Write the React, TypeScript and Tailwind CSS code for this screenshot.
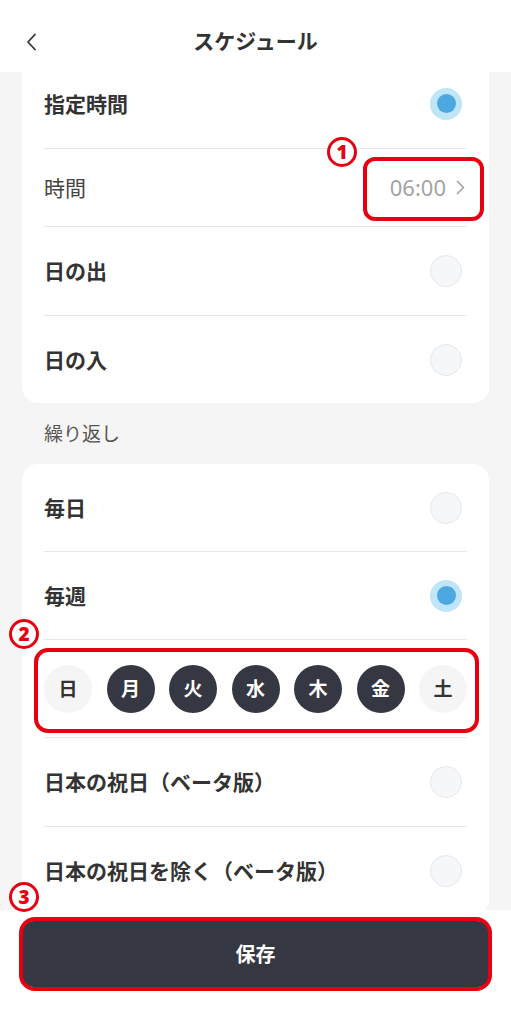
import React from "react";

const font = { fontFamily: '"Noto Sans CJK JP", "Noto Sans", sans-serif' };

function Radio({ checked }: { checked?: boolean }) {
  if (checked) {
    return (
      <div className="mr-[5px] flex h-[32px] w-[32px] items-center justify-center rounded-full bg-[#bfe5f8]">
        <div className="h-[19px] w-[19px] rounded-full bg-[#4da8e1]" />
      </div>
    );
  }
  return <div className="mr-[5px] h-[32px] w-[32px] rounded-full border-[1.5px] border-[#e6e8ec] bg-[#f6f7f9]" />;
}

function Row({ label, checked, h, pb, last }: { label: string; checked?: boolean; h: string; pb?: string; last?: boolean }) {
  return (
    <div className={`flex items-center justify-between ${h} ${pb ?? ""} ${last ? "" : "border-b border-[#e8e8e8]"}`}>
      <span className="text-[21px] font-bold text-[#333333]">{label}</span>
      <Radio checked={checked} />
    </div>
  );
}

function Marker({ n }: { n: string }) {
  return (
    <div className="flex h-[30px] w-[30px] items-center justify-center rounded-full border-[3.5px] border-[#e60012] bg-white text-[19px] leading-none font-black text-[#e60012]" style={{ fontFamily: '"Noto Sans", sans-serif' }}>
      {n}
    </div>
  );
}

const days = [
  { d: "日", on: false },
  { d: "月", on: true },
  { d: "火", on: true },
  { d: "水", on: true },
  { d: "木", on: true },
  { d: "金", on: true },
  { d: "土", on: false },
];

export default function App() {
  return (
    <div className="relative flex h-[1024px] w-[511px] flex-col overflow-hidden bg-[#f5f5f5]" style={font}>
      {/* header */}
      <div className="relative flex h-[72px] shrink-0 items-center justify-center bg-white">
        <svg className="absolute left-[25px] top-[33px]" width="14" height="18" viewBox="0 0 14 18" fill="none">
          <path d="M10 1.5 L3 9 L10 16.5" stroke="#333" strokeWidth="1.8" strokeLinecap="round" strokeLinejoin="round" />
        </svg>
        <span className="mt-[10px] text-[21px] font-bold text-[#333333]">スケジュール</span>
      </div>

      {/* scroll area */}
      <div className="flex-1 overflow-hidden">
        <div className="mx-[22px] rounded-b-[16px] bg-white px-[22px]">
          <Row label="指定時間" checked h="h-[77px]" pb="pb-[13px]" />
          <div className="flex h-[78px] items-center justify-between border-b border-[#e8e8e8]">
            <span className="text-[21px] text-[#444444]">時間</span>
            <div className="mr-[2px] flex items-center gap-[10px] text-[#a3a3a3]">
              <span className="text-[22px]" style={{ fontFamily: '"Noto Sans", sans-serif' }}>06:00</span>
              <svg width="9" height="15" viewBox="0 0 9 15" fill="none">
                <path d="M1.5 1.5 L7.5 7.5 L1.5 13.5" stroke="#a3a3a3" strokeWidth="1.7" strokeLinecap="round" strokeLinejoin="round" />
              </svg>
            </div>
          </div>
          <Row label="日の出" h="h-[89px]" />
          <Row label="日の入" h="h-[87px]" last />
        </div>

        <div className="flex h-[61px] items-center px-[44px] text-[19px] text-[#555555]">繰り返し</div>

        <div className="mx-[22px] rounded-[16px] bg-white px-[22px]">
          <Row label="毎日" h="h-[88px]" />
          <Row label="毎週" checked h="h-[88px]" />
          <div className="flex h-[98px] items-center justify-between border-b border-[#e8e8e8]">
            {days.map((x) => (
              <div
                key={x.d}
                className={`flex h-[48px] w-[48px] items-center justify-center rounded-full text-[19px] font-bold ${
                  x.on ? "bg-[#353742] text-white" : "bg-[#f5f5f5] text-[#333333]"
                }`}
              >
                {x.d}
              </div>
            ))}
          </div>
          <Row label="日本の祝日（ベータ版）" h="h-[89px]" />
          <Row label="日本の祝日を除く（ベータ版）" h="h-[88px]" last />
        </div>
      </div>

      {/* footer */}
      <div className="h-[114px] shrink-0 bg-white px-[22px] pt-[11px]">
        <button className="flex h-[66px] w-full items-center justify-center rounded-[12px] bg-[#353742] text-[20px] font-bold text-white">
          保存
        </button>
      </div>

      {/* annotations */}
      <div className="absolute left-[327px] top-[137px]"><Marker n="1" /></div>
      <div className="absolute left-[363px] top-[157px] h-[64px] w-[121px] rounded-[12px] border-[4px] border-[#e60012]" />
      <div className="absolute left-[9px] top-[619px]"><Marker n="2" /></div>
      <div className="absolute left-[34px] top-[648px] h-[85px] w-[445px] rounded-[14px] border-[4px] border-[#e60012]" />
      <div className="absolute left-[9px] top-[882px]"><Marker n="3" /></div>
      <div className="absolute left-[19px] top-[917px] h-[74px] w-[473px] rounded-[16px] border-[4px] border-[#e60012]" />
    </div>
  );
}
